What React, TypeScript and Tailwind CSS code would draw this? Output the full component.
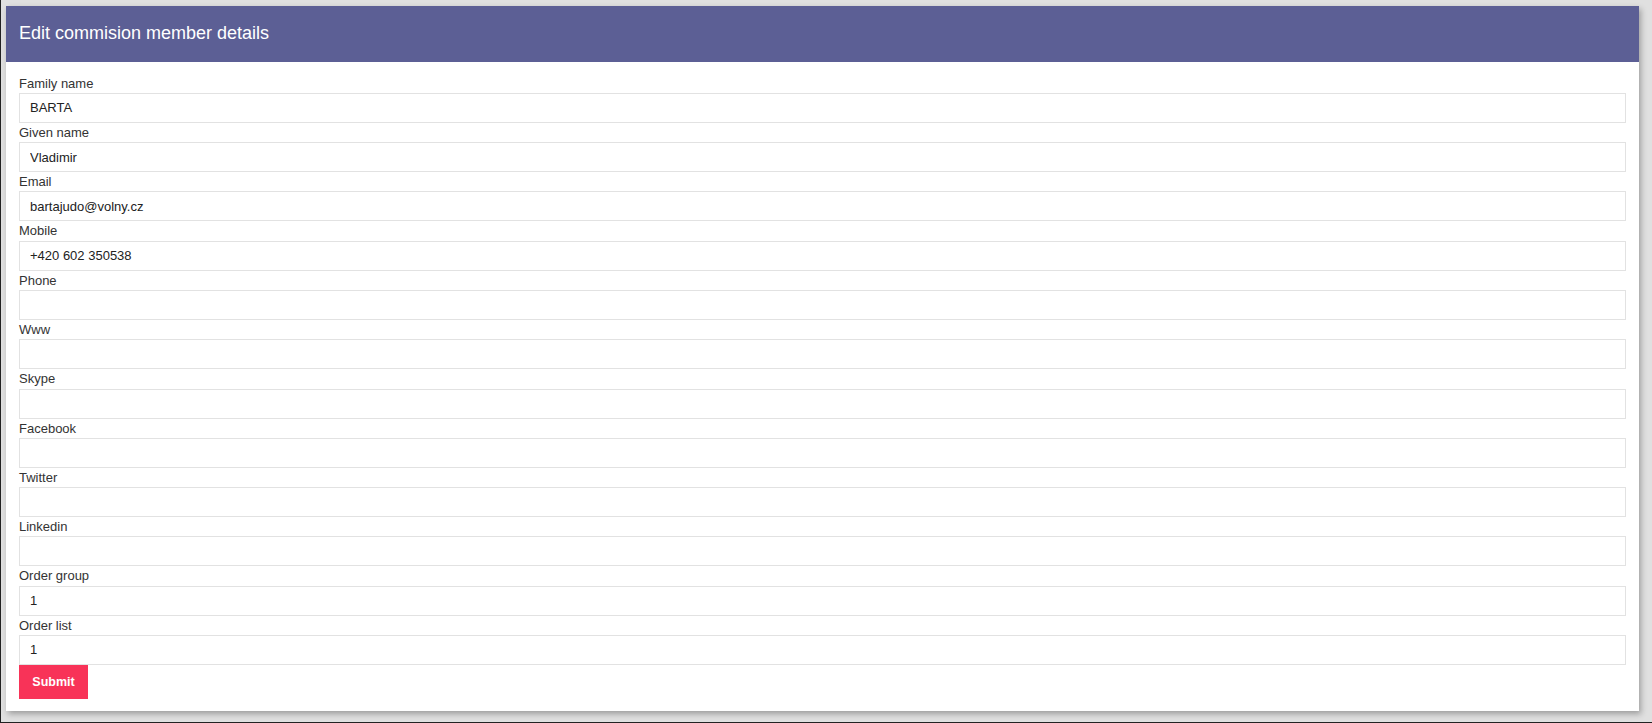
const fields: { label: string; value: string }[] = [
  { label: 'Family name', value: 'BARTA' },
  { label: 'Given name', value: 'Vladimir' },
  { label: 'Email', value: 'bartajudo@volny.cz' },
  { label: 'Mobile', value: '+420 602 350538' },
  { label: 'Phone', value: '' },
  { label: 'Www', value: '' },
  { label: 'Skype', value: '' },
  { label: 'Facebook', value: '' },
  { label: 'Twitter', value: '' },
  { label: 'Linkedin', value: '' },
  { label: 'Order group', value: '1' },
  { label: 'Order list', value: '1' },
];

function Field({ label, value }: { label: string; value: string }) {
  return (
    <div className="flex flex-col">
      <label className="h-[19.27px] text-[13px] leading-[19.27px] text-[#333]">{label}</label>
      <input
        type="text"
        defaultValue={value}
        className="h-[30px] w-full border border-[#e2e2e2] bg-white px-[10px] text-[13px] text-[#222] outline-none"
      />
    </div>
  );
}

export default function App() {
  return (
    <div
      className="h-[723px] w-[1652px] overflow-hidden border-b border-l border-[#222] bg-[#e0e0e0] pl-[5px] pt-[6px]"
      style={{ fontFamily: '"Liberation Sans", Arial, sans-serif' }}
    >
      <div className="flex h-[705px] w-[1633px] flex-col bg-white shadow-[2px_3px_6px_rgba(0,0,0,0.3)]">
        {/* Header */}
        <div className="flex h-[56px] items-center bg-[#5c5f95] pb-[1px] pl-[13px]">
          <h1 className="text-[18px] text-white">Edit commision member details</h1>
        </div>
        <form className="flex flex-col px-[13px] pt-[11.7px]" onSubmit={(e) => e.preventDefault()}>
          {fields.map((f) => (
            <Field key={f.label} label={f.label} value={f.value} />
          ))}
          <div>
            <button
              type="submit"
              className="h-[34px] w-[69px] bg-[#f83358] text-[12.5px] font-bold text-white"
            >
              Submit
            </button>
          </div>
        </form>
      </div>
    </div>
  );
}
